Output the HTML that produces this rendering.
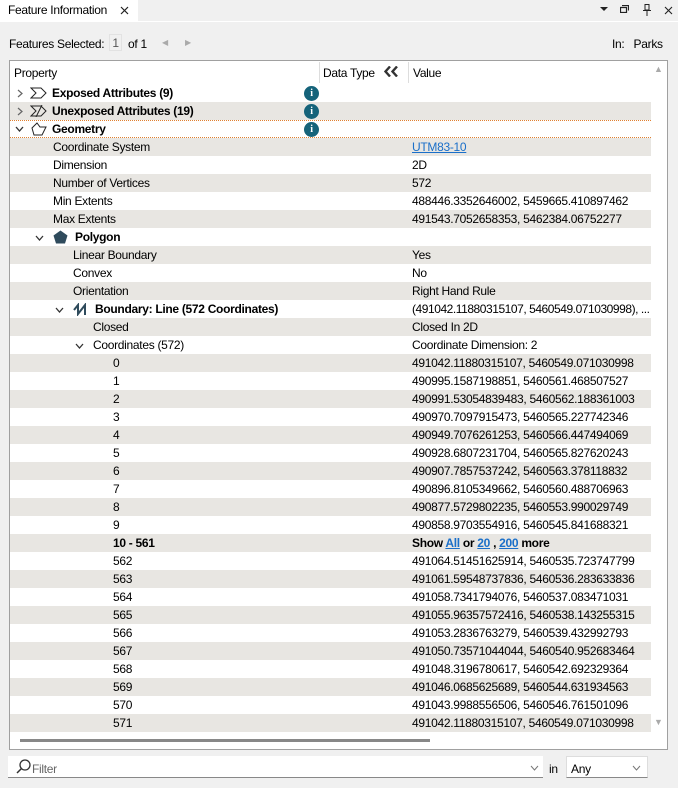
<!DOCTYPE html>
<html><head><meta charset="utf-8"><style>
*{box-sizing:border-box;margin:0;padding:0}
body{width:678px;height:788px;background:#f0f0f0;font-family:"Liberation Sans",sans-serif;font-size:12px;color:#000;position:relative;overflow:hidden;letter-spacing:-0.3px}
.abs{position:absolute;white-space:nowrap}
.tab{position:absolute;left:0;top:0;width:138px;height:21px;background:#fff;}
.box{position:absolute;left:9px;top:60px;width:659px;height:690px;background:#fff;border:1px solid #a0a0a0}
.row{position:absolute;left:10px;width:641px;height:18px;line-height:19px}
.g{background:#e8e6e2}
.b{font-weight:bold}
.v{position:absolute;left:402px}
a{color:#1a6fc9;text-decoration:underline}
.chev{position:absolute;top:5px}
.info{position:absolute;left:294px;top:2px;width:15px;height:15px;border-radius:50%;background:#15637a;color:#fff;font-weight:bold;font-size:10px;line-height:15px;text-align:center;font-family:"Liberation Serif",serif}
</style></head><body>
<div class="tab"></div>
<div class="abs" style="left:8px;top:3px;line-height:15px">Feature Information</div>
<svg class="abs" style="left:120px;top:6px" width="9" height="9"><path d="M1 1L8 8M8 1L1 8" stroke="#222" stroke-width="1.2"/></svg>
<div class="abs" style="left:0;top:21px;width:678px;height:1px;background:#fff"></div>
<svg class="abs" style="left:600px;top:7px" width="8" height="5"><path d="M0 0H8L4 4Z" fill="#222"/></svg>
<svg class="abs" style="left:620px;top:5px" width="9" height="8"><path d="M2 0.5H8.5V5.5M0.5 2.5H6.5V7.5H0.5Z" fill="none" stroke="#222" stroke-width="1.2"/></svg>
<svg class="abs" style="left:643px;top:4px" width="8" height="12"><path d="M2 0.5H6V6H2ZM0 6.5H8M4 7V12" fill="none" stroke="#222"/></svg>
<svg class="abs" style="left:664px;top:6px" width="9" height="9"><path d="M1 1L8 8M8 1L1 8" stroke="#222" stroke-width="1.1"/></svg>
<div class="abs" style="left:9px;top:37px">Features Selected:</div>
<div class="abs" style="left:109px;top:34px;width:13px;height:17px;border:1px solid #e2e2e2;text-align:center;line-height:16px;color:#555">1</div>
<div class="abs" style="left:128px;top:37px">of 1</div>
<div class="abs" style="left:162px;top:38px;font-size:8px;color:#aaa">◀</div>
<div class="abs" style="left:185px;top:38px;font-size:8px;color:#aaa">▶</div>
<div class="abs" style="left:612px;top:37px">In:&nbsp;&nbsp; Parks</div>
<div class="box"></div>
<div class="abs" style="left:14px;top:66px">Property</div>
<div class="abs" style="left:319px;top:62px;width:1px;height:21px;background:#ddd"></div>
<div class="abs" style="left:323px;top:66px">Data Type</div>
<svg class="abs" style="left:384px;top:66px" width="16" height="11"><path d="M6 0.5L1.5 5.5L6 10.5M13 0.5L8.5 5.5L13 10.5" fill="none" stroke="#333" stroke-width="2.4"/></svg>
<div class="abs" style="left:408px;top:62px;width:1px;height:21px;background:#ddd"></div>
<div class="abs" style="left:413px;top:66px">Value</div>
<div class="abs" style="left:654px;top:64px;font-size:9px;color:#aaa">▲</div>
<div class="abs" style="left:654px;top:717px;font-size:9px;color:#aaa">▼</div>
<div class="abs" style="left:20px;top:739px;width:410px;height:3px;background:#888"></div>

<div class="row" style="top:84px"><svg class="chev" style="left:7px" width="6" height="9"><path d="M1 1L5 4.5L1 8" fill="none" stroke="#666" stroke-width="1.2"/></svg><svg class="abs" style="left:20px;top:3px" width="18" height="12"><path d="M1 1H11L16 6L11 11H1L6 6Z" fill="none" stroke="#222"/></svg><span class="abs b" style="left:42px">Exposed Attributes (9)</span><span class="info">i</span></div>
<div class="row g" style="top:102px"><svg class="chev" style="left:7px" width="6" height="9"><path d="M1 1L5 4.5L1 8" fill="none" stroke="#666" stroke-width="1.2"/></svg><svg class="abs" style="left:20px;top:3px" width="18" height="12"><path d="M1 1H11L16 6L11 11H1L6 6Z M12 0L6 12" fill="none" stroke="#222"/></svg><span class="abs b" style="left:42px">Unexposed Attributes (19)</span><span class="info">i</span></div>
<div class="row" style="top:120px;border-top:1px dotted #e08030;border-bottom:1px dotted #e08030;line-height:17px"><svg class="chev" style="left:5px;top:5px" width="9" height="6"><path d="M1 1L4.5 5L8 1" fill="none" stroke="#333" stroke-width="1.3"/></svg><svg class="abs" style="left:20px;top:1px" width="18" height="15"><path d="M2 6L7 1L10 5H16L12 13H4Z" fill="none" stroke="#222"/></svg><span class="abs b" style="left:42px">Geometry</span><span class="info" style="top:1px">i</span></div>

<div class="row g" style="top:138px"><span class="abs" style="left:43px">Coordinate System</span><span class="v"><a>UTM83-10</a></span></div>
<div class="row" style="top:156px"><span class="abs" style="left:43px">Dimension</span><span class="v">2D</span></div>
<div class="row g" style="top:174px"><span class="abs" style="left:43px">Number of Vertices</span><span class="v">572</span></div>
<div class="row" style="top:192px"><span class="abs" style="left:43px">Min Extents</span><span class="v">488446.3352646002, 5459665.410897462</span></div>
<div class="row g" style="top:210px"><span class="abs" style="left:43px">Max Extents</span><span class="v">491543.7052658353, 5462384.06752277</span></div>
<div class="row" style="top:228px"><svg class="chev" style="left:25px;top:7px" width="9" height="6"><path d="M1 1L4.5 5L8 1" fill="none" stroke="#333" stroke-width="1.3"/></svg><svg class="abs" style="left:43px;top:2px" width="15" height="14"><path d="M7.5 0.5L14.5 5.5L12 13.5H3L0.5 5.5Z" fill="#2f4b5c"/></svg><span class="abs b" style="left:65px">Polygon</span></div>
<div class="row g" style="top:246px"><span class="abs" style="left:63px">Linear Boundary</span><span class="v">Yes</span></div>
<div class="row" style="top:264px"><span class="abs" style="left:63px">Convex</span><span class="v">No</span></div>
<div class="row g" style="top:282px"><span class="abs" style="left:63px">Orientation</span><span class="v">Right Hand Rule</span></div>
<div class="row" style="top:300px"><svg class="chev" style="left:45px;top:7px" width="9" height="6"><path d="M1 1L4.5 5L8 1" fill="none" stroke="#333" stroke-width="1.3"/></svg><svg class="abs" style="left:63px;top:3px" width="16" height="13"><path d="M1 7L5 2V11L12 2V12" fill="none" stroke="#2f4b5c" stroke-width="2"/></svg><span class="abs b" style="left:85px">Boundary: Line (572 Coordinates)</span><span class="v" style="letter-spacing:-0.45px">(491042.11880315107, 5460549.071030998), ...</span></div>
<div class="row g" style="top:318px"><span class="abs" style="left:83px">Closed</span><span class="v">Closed In 2D</span></div>
<div class="row" style="top:336px"><svg class="chev" style="left:65px;top:7px" width="9" height="6"><path d="M1 1L4.5 5L8 1" fill="none" stroke="#333" stroke-width="1.3"/></svg><span class="abs" style="left:83px">Coordinates (572)</span><span class="v">Coordinate Dimension: 2</span></div>

<div class="row g" style="top:354px"><span class="abs" style="left:103px">0</span><span class="v">491042.11880315107, 5460549.071030998</span></div>
<div class="row" style="top:372px"><span class="abs" style="left:103px">1</span><span class="v">490995.1587198851, 5460561.468507527</span></div>
<div class="row g" style="top:390px"><span class="abs" style="left:103px">2</span><span class="v">490991.53054839483, 5460562.188361003</span></div>
<div class="row" style="top:408px"><span class="abs" style="left:103px">3</span><span class="v">490970.7097915473, 5460565.227742346</span></div>
<div class="row g" style="top:426px"><span class="abs" style="left:103px">4</span><span class="v">490949.7076261253, 5460566.447494069</span></div>
<div class="row" style="top:444px"><span class="abs" style="left:103px">5</span><span class="v">490928.6807231704, 5460565.827620243</span></div>
<div class="row g" style="top:462px"><span class="abs" style="left:103px">6</span><span class="v">490907.7857537242, 5460563.378118832</span></div>
<div class="row" style="top:480px"><span class="abs" style="left:103px">7</span><span class="v">490896.8105349662, 5460560.488706963</span></div>
<div class="row g" style="top:498px"><span class="abs" style="left:103px">8</span><span class="v">490877.5729802235, 5460553.990029749</span></div>
<div class="row" style="top:516px"><span class="abs" style="left:103px">9</span><span class="v">490858.9703554916, 5460545.841688321</span></div>
<div class="row g" style="top:534px"><span class="abs b" style="left:103px">10 - 561</span><span class="v b">Show <a>All</a> or <a>20</a> , <a>200</a> more</span></div>
<div class="row" style="top:552px"><span class="abs" style="left:103px">562</span><span class="v">491064.51451625914, 5460535.723747799</span></div>
<div class="row g" style="top:570px"><span class="abs" style="left:103px">563</span><span class="v">491061.59548737836, 5460536.283633836</span></div>
<div class="row" style="top:588px"><span class="abs" style="left:103px">564</span><span class="v">491058.7341794076, 5460537.083471031</span></div>
<div class="row g" style="top:606px"><span class="abs" style="left:103px">565</span><span class="v">491055.96357572416, 5460538.143255315</span></div>
<div class="row" style="top:624px"><span class="abs" style="left:103px">566</span><span class="v">491053.2836763279, 5460539.432992793</span></div>
<div class="row g" style="top:642px"><span class="abs" style="left:103px">567</span><span class="v">491050.73571044044, 5460540.952683464</span></div>
<div class="row" style="top:660px"><span class="abs" style="left:103px">568</span><span class="v">491048.3196780617, 5460542.692329364</span></div>
<div class="row g" style="top:678px"><span class="abs" style="left:103px">569</span><span class="v">491046.0685625689, 5460544.631934563</span></div>
<div class="row" style="top:696px"><span class="abs" style="left:103px">570</span><span class="v">491043.9988556506, 5460546.761501096</span></div>
<div class="row g" style="top:714px"><span class="abs" style="left:103px">571</span><span class="v">491042.11880315107, 5460549.071030998</span></div>

<div class="abs" style="left:8px;top:756px;width:535px;height:22px;background:#fff;border-bottom:1px solid #888"></div>
<svg class="abs" style="left:15px;top:759px" width="18" height="16"><circle cx="10" cy="6" r="5" fill="none" stroke="#333" stroke-width="1.3"/><path d="M6.5 9.5L2 14" stroke="#333" stroke-width="1.5"/></svg>
<div class="abs" style="left:32px;top:762px;color:#666">Filter</div>
<svg class="abs" style="left:530px;top:765px" width="9" height="6"><path d="M1 1L4.5 5L8 1" fill="none" stroke="#777"/></svg>
<div class="abs" style="left:549px;top:762px">in</div>
<div class="abs" style="left:566px;top:756px;width:82px;height:22px;background:#fff;border:1px solid #ddd;border-bottom:1px solid #888"></div>
<div class="abs" style="left:571px;top:762px">Any</div>
<svg class="abs" style="left:632px;top:765px" width="9" height="6"><path d="M1 1L4.5 5L8 1" fill="none" stroke="#777"/></svg>
</body></html>
